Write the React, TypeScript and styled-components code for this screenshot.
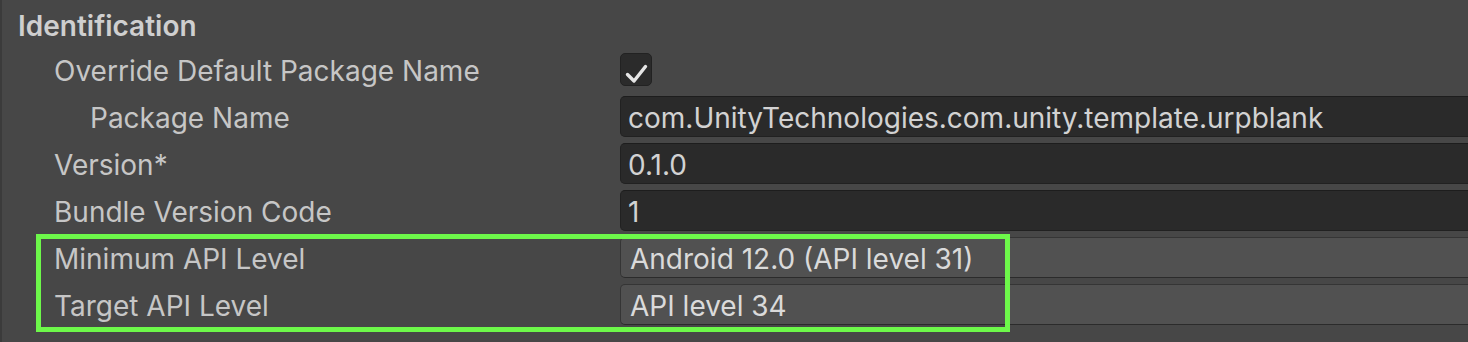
import React from 'react';
import styled, { createGlobalStyle } from 'styled-components';

const GlobalStyle = createGlobalStyle`
  html, body {
    margin: 0;
    padding: 0;
    background: #474747;
    overflow: hidden;
  }
`;

type Field = {
  label: string;
  indent: number;
  kind: 'check' | 'text' | 'popup';
  value?: string;
};

const fields: Field[] = [
  { label: 'Override Default Package Name', indent: 1, kind: 'check' },
  { label: 'Package Name', indent: 2, kind: 'text', value: 'com.UnityTechnologies.com.unity.template.urpblank' },
  { label: 'Version*', indent: 1, kind: 'text', value: '0.1.0' },
  { label: 'Bundle Version Code', indent: 1, kind: 'text', value: '1' },
];

const apiFields: Field[] = [
  { label: 'Minimum API Level', indent: 1, kind: 'popup', value: 'Android 12.0 (API level 31)' },
  { label: 'Target API Level', indent: 1, kind: 'popup', value: 'API level 34' },
];

const CheckMark = () => (
  <svg width="32" height="33" viewBox="0 0 32 33">
    <polyline
      points="7.5,21.5 14,28 25.5,13.5"
      fill="none"
      stroke="#e6e6e6"
      strokeWidth="3.4"
      strokeLinecap="round"
      strokeLinejoin="round"
    />
  </svg>
);

const PropertyRow = ({ field }: { field: Field }) => (
  <Row>
    <Label $indent={field.indent}>{field.label}</Label>
    <Control>
      {field.kind === 'check' && (
        <Checkbox>
          <CheckMark />
        </Checkbox>
      )}
      {field.kind === 'text' && <TextField>{field.value}</TextField>}
      {field.kind === 'popup' && <Popup>{field.value}</Popup>}
    </Control>
  </Row>
);

const App = () => {
  return (
    <>
      <GlobalStyle />
      <Inspector>
        <Header>Identification</Header>
        {fields.map((f) => (
          <PropertyRow key={f.label} field={f} />
        ))}
        <Highlighted>
          {apiFields.map((f) => (
            <PropertyRow key={f.label} field={f} />
          ))}
          <HighlightBox />
        </Highlighted>
      </Inspector>
    </>
  );
};

const Inspector = styled.div`
  width: 1500px;
  height: 342px;
  display: flex;
  flex-direction: column;
  border-left: 2px solid #3b3b3b;
  font-family: 'Inter', 'Noto Sans', sans-serif;
  font-size: 28px;
  color: #c6c6c6;
`;

const Header = styled.div`
  height: 46px;
  display: flex;
  align-items: center;
  padding-left: 16px;
  padding-top: 5px;
  box-sizing: border-box;
  font-weight: 600;
  color: #cfcfcf;
`;

const Row = styled.div`
  height: 47px;
  display: flex;
  align-items: center;
`;

const Label = styled.div<{ $indent: number }>`
  width: 618px;
  flex-shrink: 0;
  box-sizing: border-box;
  padding-left: ${(p) => 16 + p.$indent * 36}px;
  padding-top: 2px;
  white-space: nowrap;
`;

const Control = styled.div`
  flex: 1;
  display: flex;
  align-items: center;
`;

const Checkbox = styled.div`
  width: 32px;
  height: 33px;
  box-sizing: border-box;
  border-radius: 5px;
  background: #2b2b2b;
  border: 1px solid #222222;
  display: flex;
  align-items: center;
  justify-content: center;
  svg {
    margin: -1px;
  }
`;

const TextField = styled.div`
  flex: 1;
  height: 41px;
  box-sizing: border-box;
  border-radius: 5px;
  background: #2a2a2a;
  border: 1px solid #212121;
  border-top-color: #1d1d1d;
  display: flex;
  align-items: center;
  padding-left: 7px;
  padding-top: 2px;
  color: #d2d2d2;
  white-space: nowrap;
`;

const Popup = styled(TextField)`
  background: #515151;
  border: 1px solid #353535;
  border-bottom-color: #2b2b2b;
  padding-left: 9px;
  color: #dadada;
`;

const Highlighted = styled.div`
  position: relative;
  display: flex;
  flex-direction: column;
`;

const HighlightBox = styled.div`
  position: absolute;
  top: 0;
  left: 34px;
  width: 974px;
  height: 98px;
  box-sizing: border-box;
  border: 5px solid #6df84a;
  pointer-events: none;
`;

export default App;
